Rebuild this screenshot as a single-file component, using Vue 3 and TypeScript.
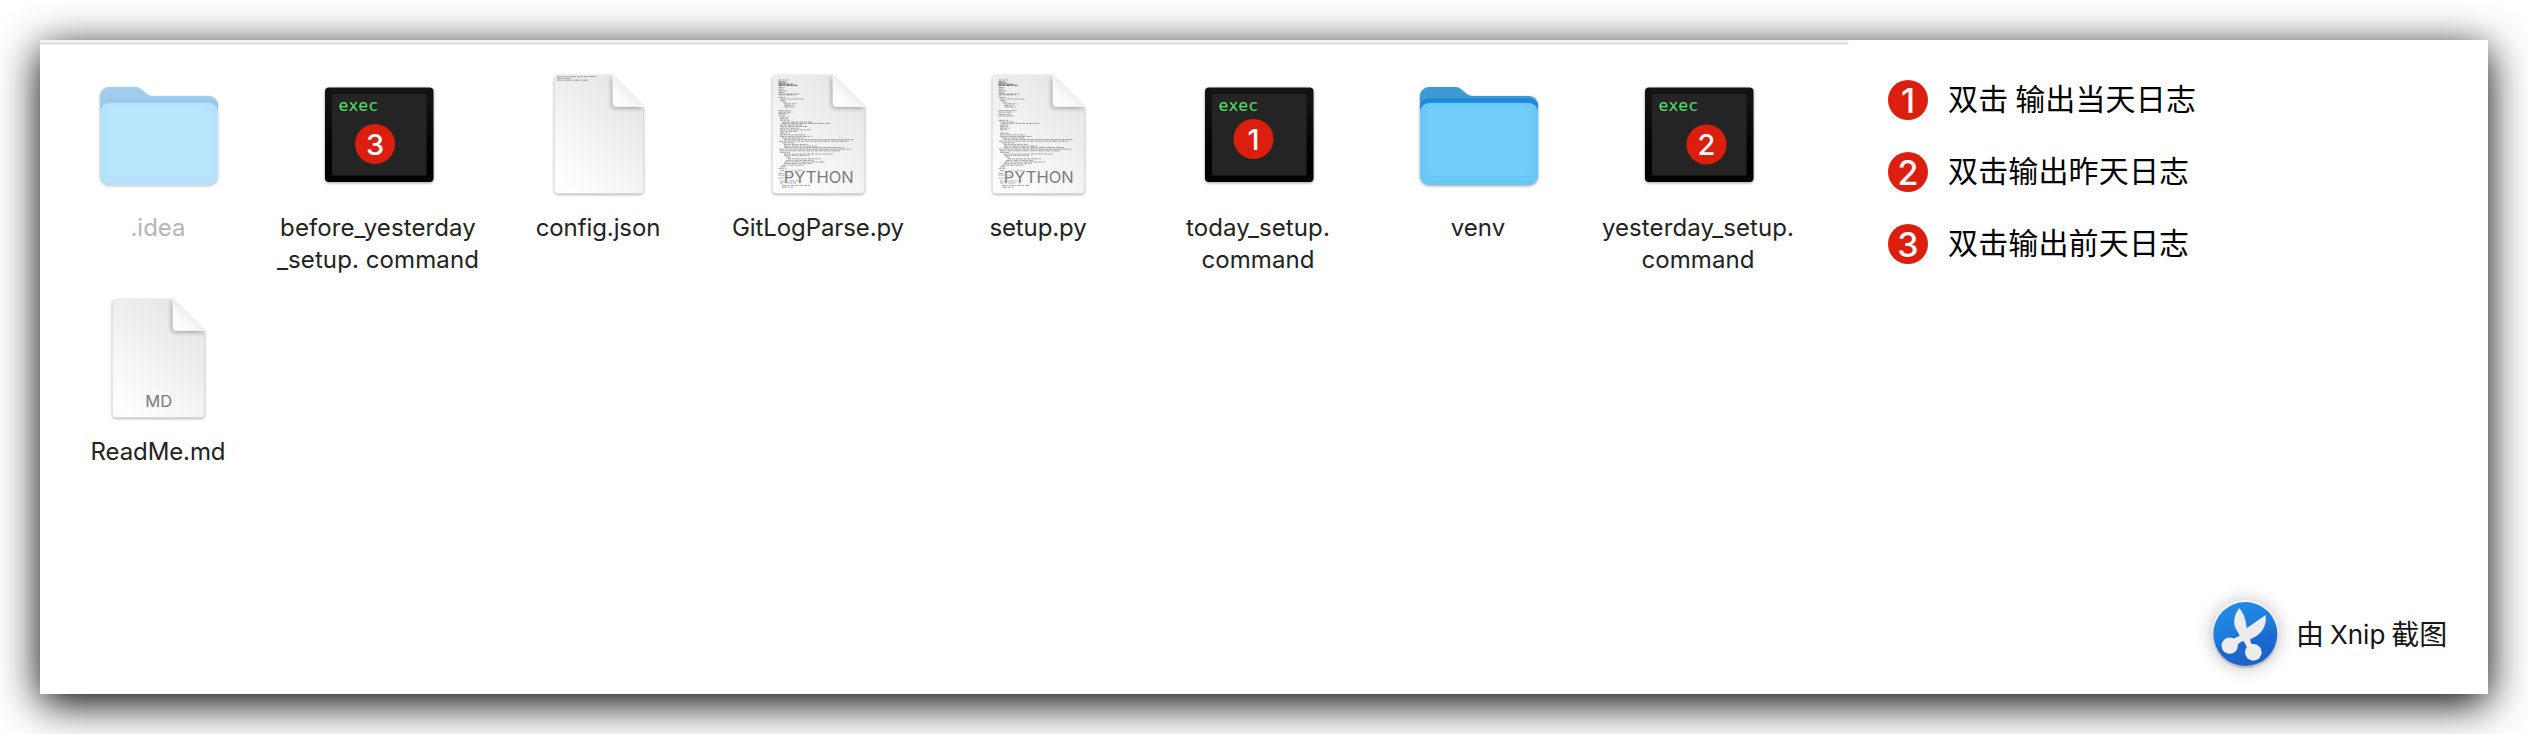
<script setup lang="ts">
type Kind = 'folder' | 'exec' | 'doc'
type Line = [x: number, y: number, width: number]

interface FileItem {
  lines: string[]
  kind: Kind
  hidden?: boolean
  badge?: { n: number; x: number; y: number }
  tag?: string
  narrow?: boolean
  code?: Line[]
}

const header: Line[] = [
  [70.5, 8, 10], [70.5, 9.6, 7], [70.5, 11, 9], [70.5, 12.2, 16], [70.5, 13.4, 19],
  [70.5, 15.6, 6], [70.5, 17.2, 5], [70.5, 18.8, 8], [70.5, 20.4, 6],
  [70.5, 22, 21], [70.5, 22.8, 17],
  [70.5, 25.4, 7], [72.5, 27, 24], [72.5, 28.6, 5], [74.5, 30.2, 4],
  [76.5, 31.8, 12], [76.5, 33.4, 9], [76.5, 35, 11],
]

const body: Line[] = [
  [72, 61.2, 9], [72, 62.8, 25], [72, 64.4, 32], [74, 66, 22],
  [76, 67.6, 69], [71, 69.2, 70], [74, 70.8, 12], [76, 72.4, 24],
  [76, 74, 33], [76, 75.6, 60], [71, 77.2, 73], [72, 78.8, 60], [72, 80.4, 10],
  [76, 82, 49], [76, 83.4, 25], [78, 85.2, 4], [80, 86.8, 33],
  [78, 88.4, 28], [76, 90, 41], [76, 91.6, 28], [74, 93.2, 22], [72, 94.8, 6],
  [70.5, 96.4, 8], [72, 98.6, 26], [70.5, 101.4, 6], [70.5, 103.2, 15],
  [70.5, 106, 8], [72, 109, 22], [72, 111, 16], [74, 113.4, 28], [74, 115.2, 11],
]

const parseCode: Line[] = [
  ...header,
  [70.5, 38.6, 12], [70.5, 40.2, 14], [70.5, 41.6, 10], [70.5, 43.2, 7],
  [72, 45, 9], [72, 46.6, 8], [72, 48.2, 10], [74, 50, 31], [74, 51.4, 48],
  [72, 53, 22], [72, 54.4, 28], [72, 56.2, 20], [72, 57.8, 31], [72, 59.4, 18],
  ...body,
]

const setupCode: Line[] = [
  ...header,
  [70.5, 38.6, 18], [70.5, 40.2, 14], [70.5, 42.4, 12], [70.5, 44, 16],
  [70.5, 48.4, 10], [72, 50, 14], [74, 51.4, 38], [72, 53, 9], [72, 54.6, 8],
  [72, 56.2, 9], [72, 57.8, 8],
  ...body,
]

const jsonCode: Line[] = [[69, 4.6, 39], [69, 6.4, 14], [69, 8.2, 31]]

const files: FileItem[] = [
  { lines: ['.idea'], kind: 'folder', hidden: true },
  { lines: ['before_yesterday', '_setup. command'], kind: 'exec', badge: { n: 3, x: 107, y: 72 } },
  { lines: ['config.json'], kind: 'doc', narrow: true, code: jsonCode },
  { lines: ['GitLogParse.py'], kind: 'doc', tag: 'PYTHON', code: parseCode },
  { lines: ['setup.py'], kind: 'doc', tag: 'PYTHON', code: setupCode },
  { lines: ['today_setup.', 'command'], kind: 'exec', badge: { n: 1, x: 105.5, y: 67 } },
  { lines: ['venv'], kind: 'folder' },
  { lines: ['yesterday_setup.', 'command'], kind: 'exec', badge: { n: 2, x: 118.5, y: 72.5 } },
  { lines: ['ReadMe.md'], kind: 'doc', tag: 'MD' },
]

const legend = ['双击 输出当天日志', '双击输出昨天日志', '双击输出前天日志']
</script>

<template>
  <div class="page">
    <main class="sheet">
      <section class="finder">
        <div class="strip"></div>
        <div class="grid">
          <figure v-for="(file, i) in files" :key="i" class="file" :class="[file.kind + '-file', { hidden: file.hidden }]">
            <svg class="icon" viewBox="0 0 220 140" width="220" height="140">
              <defs>
                <linearGradient :id="'paper' + i" x1="0.85" y1="0.1" x2="0.25" y2="1">
                  <stop offset="0" stop-color="#e6e6e7" />
                  <stop offset="0.45" stop-color="#f0f0f1" />
                  <stop offset="1" stop-color="#fefefe" />
                </linearGradient>
                <linearGradient :id="'fold' + i" x1="0.1" y1="0.95" x2="0.55" y2="0.45">
                  <stop offset="0" stop-color="#ffffff" />
                  <stop offset="0.5" stop-color="#fbfbfb" />
                  <stop offset="1" stop-color="#ececec" />
                </linearGradient>
                <linearGradient :id="'frame' + i" x1="0" y1="0" x2="0" y2="1">
                  <stop offset="0" stop-color="#151515" />
                  <stop offset="0.6" stop-color="#050505" />
                  <stop offset="1" stop-color="#000000" />
                </linearGradient>
                <clipPath :id="'clip' + i">
                  <path d="M68.500 3H124.500L157 35V117.500a4 4 0 0 1-4 4H68.500a4 4 0 0 1-4-4V7a4 4 0 0 1 4-4Z" />
                </clipPath>
                <filter :id="'soft' + i" x="-50%" y="-50%" width="200%" height="200%">
                  <feGaussianBlur stdDeviation="2.600" />
                </filter>
              </defs>

              <g v-if="file.kind === 'folder'" class="folder">
                <path class="back" d="M52 40V24a9 9 0 0 1 9-9H86c4.500 0 6.500 1.500 9.500 4.200C99 22.300 101 24 106 24H161a9 9 0 0 1 9 9V60H52Z" />
                <path class="lip" d="M52 42V33Q53 27 61 26.500H161Q169 27 170 34V60H52Z" />
                <rect class="front" x="52" y="31" width="118" height="82" rx="9" />
                <rect class="front-inner" x="59" y="34" width="104" height="70" rx="4" />
                <path class="crease" d="M54 104.500H168" />
              </g>

              <g v-else-if="file.kind === 'exec'">
                <g class="terminal">
                  <rect x="57" y="15.500" width="108.500" height="94.500" rx="4" :fill="`url(#frame${i})`" />
                  <rect x="64" y="22" width="94.500" height="81.500" fill="#242424" />
                </g>
                <text class="exec" x="70.500" y="39">exec</text>
                <template v-if="file.badge">
                  <circle :cx="file.badge.x" :cy="file.badge.y" r="20" fill="#dc1e0e" />
                  <text class="digit" :x="file.badge.x" :y="file.badge.y + 10.500">{{ file.badge.n }}</text>
                </template>
              </g>

              <g v-else class="doc">
                <g :transform="file.narrow ? 'translate(4.2 0) scale(0.966 1)' : undefined">
                  <path class="paper" :fill="`url(#paper${i})`" d="M68.500 3H124.500L156.500 35V117.500a4 4 0 0 1-4 4H68.500a4 4 0 0 1-4-4V7a4 4 0 0 1 4-4Z" />
                  <g :clip-path="`url(#clip${i})`">
                    <path :filter="`url(#soft${i})`" fill="#000" opacity="0.36" d="M124 4V33a3 3 0 0 0 3 3H157Z" />
                  </g>
                  <path :fill="`url(#fold${i})`" stroke="#fff" stroke-width="0.8" d="M125 4V31.500a3 3 0 0 0 3 3H156Z" />
                </g>
                <line
                  v-for="(l, k) in file.code ?? []" :key="k" class="code"
                  :x1="l[0]" :y1="l[1]" :x2="l[0] + l[2]" :y2="l[1]"
                  :stroke-dasharray="`${3 + (k % 3)} 0.7 ${2 + (k % 2)} 1`"
                  :stroke-opacity="l[1] < 14 && l[1] > 10 ? 0.8 : 0.48"
                />
                <text v-if="file.tag" class="tag" x="110.700" y="110.500">{{ file.tag }}</text>
              </g>
            </svg>
            <figcaption class="name">
              <span v-for="line in file.lines" :key="line">{{ line }}</span>
            </figcaption>
          </figure>
        </div>
      </section>

      <aside class="side">
        <ol class="legend">
          <li v-for="(text, i) in legend" :key="text">
            <b class="num">{{ i + 1 }}</b>
            <span>{{ text }}</span>
          </li>
        </ol>
        <footer class="credit">
          <svg viewBox="0 0 240 240" width="80" height="80" class="logo">
            <defs>
              <linearGradient id="logoFill" x1="0.3" y1="0" x2="0.6" y2="1">
                <stop offset="0" stop-color="#208ce4" />
                <stop offset="0.45" stop-color="#1f7cdb" />
                <stop offset="0.65" stop-color="#1c68d0" />
                <stop offset="1" stop-color="#1c62cc" />
              </linearGradient>
              <linearGradient id="logoRim" x1="0" y1="0" x2="0" y2="1">
                <stop offset="0" stop-color="#ffffff" />
                <stop offset="0.5" stop-color="#e2e2e2" />
                <stop offset="1" stop-color="#bcbcbc" />
              </linearGradient>
            </defs>
            <circle class="rim" cx="121" cy="127" r="102" fill="url(#logoRim)" />
            <circle cx="121" cy="126" r="96" fill="url(#logoFill)" />
            <g fill="#ececec">
              <path d="M102 49C84 76 83 100 99 121L104 131L82 142L92 172Q98 150 116 147L127 168L152 170L142 158Q134 150 136 141C166 130 187 106 182 69L125 109C123 85 116 62 102 49Z" />
              <circle cx="74" cy="161" r="24.500" />
              <circle cx="145" cy="181" r="25" />
            </g>
          </svg>
          <span class="zh">由</span>
          <span class="en">Xnip</span>
          <span class="zh">截图</span>
        </footer>
      </aside>
    </main>
  </div>
</template>

<style>
body { margin: 0; background: #fff; overflow: hidden; }
</style>

<style scoped>
.page {
  box-sizing: border-box;
  width: 2528px;
  height: 734px;
  padding: 40px;
  overflow: hidden;
  background: #fff;
  font-family: Inter, "Noto Sans CJK SC", sans-serif;
}
.sheet {
  display: flex;
  width: 2448px;
  height: 654px;
  background: #fff;
  box-shadow: 0 9px 40px #000;
}
.finder { width: 1808px; }
.strip {
  height: 3px;
  background: #f6f0f6;
  border-bottom: 1px solid #d8d5d8;
  box-shadow: 0 1px #f3eff3;
}
.grid {
  display: grid;
  grid-template-columns: repeat(8, 220px);
  grid-auto-rows: 224px;
  padding: 28px 0 0 8px;
}
.file {
  display: flex;
  flex-direction: column;
  align-items: center;
  margin: 0;
}
.icon { display: block; }
.name {
  display: flex;
  flex-direction: column;
  align-items: center;
  font-size: 24px;
  line-height: 32px;
  color: #222;
  white-space: nowrap;
}
.doc-file .name { letter-spacing: -0.1px; }
.exec-file .name { letter-spacing: 0.1px; }
.hidden .name { color: #b5b5b5; }

.folder, .terminal, .paper { filter: drop-shadow(0 1.5px 1.5px rgba(0, 0, 0, 0.38)); }
.back { fill: #3c9ad4; }
.lip { fill: #1e86e0; }
.front { fill: #68c8f5; }
.front-inner { fill: #74cefc; filter: blur(3px); }
.crease { stroke: #62c2f1; stroke-width: 1; }
.hidden .back { fill: #a0cdec; }
.hidden .lip { fill: #9bc8ea; }
.hidden .front { fill: #b3e2f9; }
.hidden .front-inner { fill: #bae7fe; }
.hidden .crease { stroke: #b1dff8; }
.hidden .folder { filter: drop-shadow(0 1.5px 1.5px rgba(0, 0, 0, 0.25)); }

.exec {
  font: 16.5px "DejaVu Sans Mono", monospace;
  fill: #4fe368;
}
.digit {
  font: 500 29px Inter, sans-serif;
  fill: #fff;
  text-anchor: middle;
}
.code { stroke: #333; stroke-width: 0.9; }
.tag {
  font: 16.5px Inter, sans-serif;
  fill: #7c7c7c;
  text-anchor: middle;
  stroke: #f6f6f6;
  stroke-width: 1.6px;
  paint-order: stroke;
}

.side {
  display: flex;
  flex: 1;
  flex-direction: column;
  justify-content: space-between;
}
.legend {
  display: flex;
  flex-direction: column;
  gap: 32px;
  margin: 0;
  padding: 40px 0 0 40px;
  list-style: none;
}
.legend li {
  display: flex;
  align-items: center;
  gap: 20px;
  height: 40px;
  font: 30px/40px "Noto Sans CJK SC", sans-serif;
  letter-spacing: 0.15px;
  color: #000;
  white-space: pre;
}
.legend span { padding-bottom: 7px; }
.num {
  width: 40px;
  height: 40px;
  border-radius: 50%;
  background: #dc1e0e;
  color: #fff;
  font: 500 34px/41px Inter, sans-serif;
  letter-spacing: 0;
  text-align: center;
}
.credit {
  display: flex;
  align-items: center;
  padding: 0 0 22px 357px;
  color: #151515;
}
.logo { overflow: visible; margin-right: 11px; }
.rim { filter: drop-shadow(0 0 26px rgba(0, 0, 0, 0.24)); }
.zh { padding-top: 1px; font: 28px/40px "Noto Sans CJK SC", sans-serif; }
.en { margin: 0 6px; padding-top: 5px; font: 26px/40px Inter, sans-serif; }
</style>
